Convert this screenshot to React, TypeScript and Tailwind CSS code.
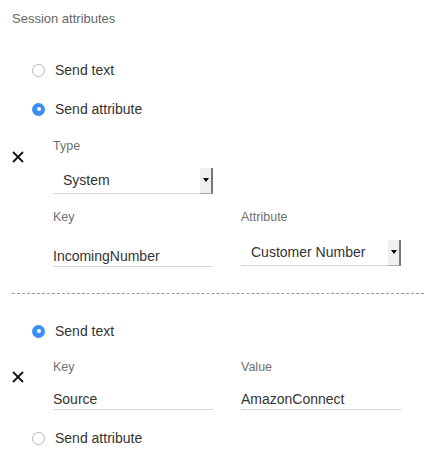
import React from 'react';

const Radio = ({ checked, label }: { checked: boolean; label: string }) => (
    <div className="flex items-center h-5 pl-5">
        {checked ? (
            <span className="w-[13px] h-[13px] rounded-full bg-[#3b8ef5] flex items-center justify-center">
                <span className="w-[4px] h-[4px] rounded-full bg-white" />
            </span>
        ) : (
            <span className="w-[13px] h-[13px] rounded-full border border-[#b5b5b5] bg-white" />
        )}
        <span className="ml-[10px] text-[14px] text-[#333]">{label}</span>
    </div>
);

const Remove = () => (
    <svg width="12" height="12" viewBox="0 0 12 12" className="block">
        <path d="M1 1 L11 11 M11 1 L1 11" stroke="#111" strokeWidth="1.8" />
    </svg>
);

const Label = ({ text }: { text: string }) => (
    <div className="text-[12.5px] leading-4 text-[#6f6f6f]">{text}</div>
);

const TextField = ({ value }: { value: string }) => (
    <div className="h-[26px] w-[160px] border-b border-[#d6d6d6] flex items-center text-[14px] text-[#333] pt-[5px]">
        {value}
    </div>
);

const SelectField = ({ value }: { value: string }) => (
    <div className="h-[26px] w-[160px] border-b border-[#d6d6d6] flex items-center justify-between text-[14px] text-[#333]">
        <span className="pl-[10px]">{value}</span>
        <span className="h-[26px] w-[13px] bg-[#efefef] border-r-2 border-b border-r-[#777] border-b-[#aaa] flex items-center justify-center">
            <span className="w-0 h-0 border-l-[3px] border-r-[3px] border-t-[4px] border-l-transparent border-r-transparent border-t-black" />
        </span>
    </div>
);

const App = () => {
    return (
        <div className="w-[436px] h-[459px] bg-white px-3 pt-[11px]" style={{ fontFamily: '"Liberation Sans", Arial, sans-serif' }}>
            <div className="text-[13px] leading-4 text-[#666]">Session attributes</div>

            <div className="mt-[33px]">
                <Radio checked={false} label="Send text" />
            </div>
            <div className="mt-[19px]">
                <Radio checked={true} label="Send attribute" />
            </div>

            <div className="flex mt-[19px]">
                <div className="w-[41px] pt-[13px]">
                    <Remove />
                </div>
                <div>
                    <Label text="Type" />
                    <div className="mt-[14px]">
                        <SelectField value="System" />
                    </div>
                    <div className="flex gap-[28px] mt-[15px]">
                        <div>
                            <Label text="Key" />
                            <div className="mt-[16px]">
                                <TextField value="IncomingNumber" />
                            </div>
                        </div>
                        <div>
                            <Label text="Attribute" />
                            <div className="mt-[15px]">
                                <SelectField value="Customer Number" />
                            </div>
                        </div>
                    </div>
                </div>
            </div>

            <div className="mt-[26px] border-t border-dashed border-[#999]" />

            <div className="mt-[27px]">
                <Radio checked={true} label="Send text" />
            </div>
            <div className="flex mt-[18px]">
                <div className="w-[41px] pt-[12px]">
                    <Remove />
                </div>
                <div className="flex gap-[28px]">
                    <div>
                        <Label text="Key" />
                        <div className="mt-[9px]">
                            <TextField value="Source" />
                        </div>
                    </div>
                    <div>
                        <Label text="Value" />
                        <div className="mt-[9px]">
                            <TextField value="AmazonConnect" />
                        </div>
                    </div>
                </div>
            </div>
            <div className="mt-[18px]">
                <Radio checked={false} label="Send attribute" />
            </div>
        </div>
    );
};

export default App;
